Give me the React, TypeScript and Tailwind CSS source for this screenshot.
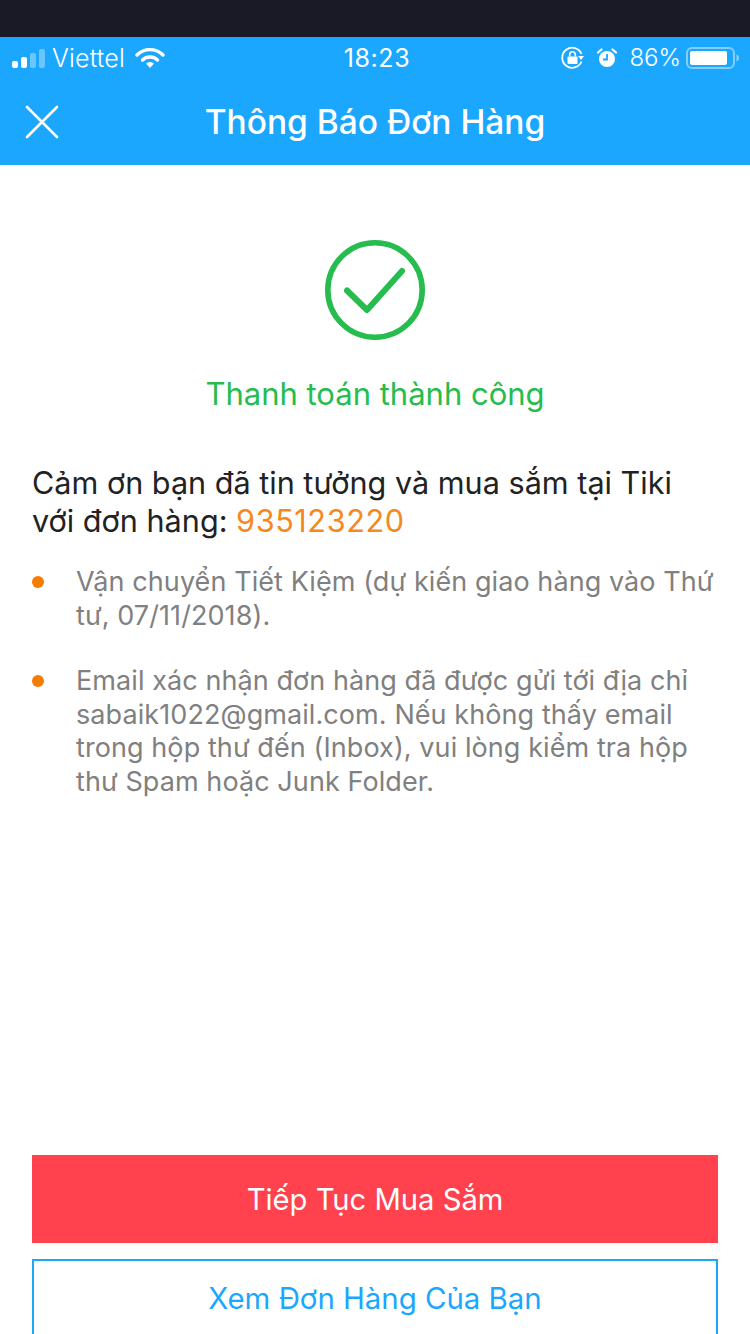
export default function App() {
  const font = { fontFamily: 'Inter, "Noto Sans", sans-serif' };
  return (
    <div style={font} className="w-[750px] h-[1334px] overflow-hidden bg-white flex flex-col">
      <div className="h-[37px] bg-[#1a1a26] shrink-0" />
      <div className="h-[128px] bg-[#1ca7ff] shrink-0 flex flex-col text-white">
        <div className="h-[42px] flex items-center justify-between pl-[12px] pr-[11px]">
          <div className="flex items-center w-[200px]">
            <svg width="33" height="20" viewBox="0 0 33 20" className="mr-[7px] mt-[2px]">
              <rect x="0" y="12" width="6" height="7" rx="2" fill="#fff" />
              <rect x="9" y="8" width="6" height="11" rx="2" fill="#fff" />
              <rect x="18" y="4" width="6" height="15" rx="2" fill="#fff" fillOpacity="0.35" />
              <rect x="27" y="0" width="6" height="19" rx="2" fill="#fff" fillOpacity="0.35" />
            </svg>
            <span className="text-[25px] leading-none font-light tracking-[0.2px] text-white">Viettel</span>
            <svg width="30" height="22" viewBox="0 0 30 22" className="ml-[10px]">
              <path d="M2 8a18.5 18.5 0 0 1 26 0" fill="none" stroke="#fff" strokeWidth="3.4" strokeLinecap="round" />
              <path d="M7.5 13a11 11 0 0 1 15 0" fill="none" stroke="#fff" strokeWidth="3.4" strokeLinecap="round" />
              <path d="M11 16.6a6 6 0 0 1 8 0L15 21z" fill="#fff" />
            </svg>
          </div>
          <span className="text-[25px] leading-none tracking-[0.6px] font-normal ml-[3px]">18:23</span>
          <div className="flex items-center justify-end w-[200px]">
            <svg width="24" height="24" viewBox="0 0 24 24" className="mr-[12px]">
              <path d="M20.5 15.5A10 10 0 1 1 20.5 8" fill="none" stroke="#fff" strokeWidth="1.8" />
              <path d="M18 11h6l-3 4z" fill="#fff" transform="translate(-1 -1)" />
              <rect x="6.5" y="10.5" width="10" height="7.5" rx="1" fill="#fff" />
              <path d="M8.7 10.5V8.500a2.800 2.800 0 0 1 5.600 0v2" fill="none" stroke="#fff" strokeWidth="1.6" />
            </svg>
            <svg width="20" height="20" viewBox="0 0 20 20" className="mr-[12px]">
              <circle cx="10" cy="11" r="8" fill="#fff" />
              <path d="M10 6v5.500H6" fill="none" stroke="#1ca7ff" strokeWidth="1.8" />
              <path d="M1 4.500 4.500 1.500M19 4.500 15.500 1.500" stroke="#fff" strokeWidth="2.200" strokeLinecap="round" />
            </svg>
            <span className="text-[24px] leading-none font-light">86%</span>
            <svg width="53" height="24" viewBox="0 0 53 24" className="ml-[5px]">
              <rect x="1" y="2" width="47" height="20" rx="5" fill="none" stroke="#fff" strokeOpacity="0.45" strokeWidth="2" />
              <rect x="4" y="5" width="37" height="14" rx="2" fill="#fff" />
              <path d="M50.500 8.500c1.500.4 2.500 2 2.500 3.500s-1 3.100-2.500 3.500z" fill="#fff" fillOpacity="0.5" />
            </svg>
          </div>
        </div>
        <div className="relative flex-1 flex items-center justify-center pt-[1px]">
          <svg width="36" height="36" viewBox="0 0 36 36" className="absolute left-[24px] top-[25px]">
            <path d="M3 3 33 33M33 3 3 33" stroke="#fff" strokeWidth="2.600" strokeLinecap="round" />
          </svg>
          <span className="text-[33.500px] leading-none font-medium">Thông Báo Đơn Hàng</span>
        </div>
      </div>

      <div className="flex-1 flex flex-col min-h-0 px-[32px]">
        <div className="flex flex-col items-center pt-[74px]">
          <svg width="102" height="102" viewBox="0 0 102 102">
            <circle cx="51" cy="51" r="47.200" fill="none" stroke="#26bc4e" strokeWidth="5.600" />
            <path d="M23 51.500 43 71 78 32" fill="none" stroke="#26bc4e" strokeWidth="6" strokeLinecap="round" strokeLinejoin="round" />
          </svg>
          <div className="mt-[33px] text-[31px] leading-[40px] text-[#26bc4e]">Thanh toán thành công</div>
        </div>
        <p className="mt-[50px] text-[30.600px] leading-[38px] text-[#222222] whitespace-nowrap">
          Cảm ơn bạn đã tin tưởng và mua sắm tại Tiki
          <br />
          với đơn hàng: <span className="text-[#f5881f] tracking-[0.6px]">935123220</span>
        </p>
        <ul className="mt-[25px] flex flex-col gap-[32px] text-[27px] leading-[33.500px] text-[#808080] tracking-[0.08px]">
          <li className="flex">
            <span className="w-[12px] h-[12px] rounded-full bg-[#f57c00] mt-[11px] shrink-0" />
            <span className="ml-[32px] w-[650px] whitespace-nowrap">
              Vận chuyển Tiết Kiệm (dự kiến giao hàng vào Thứ
              <br />
              tư, 07/11/2018).
            </span>
          </li>
          <li className="flex">
            <span className="w-[12px] h-[12px] rounded-full bg-[#f57c00] mt-[11px] shrink-0" />
            <span className="ml-[32px] w-[650px] whitespace-nowrap">
              Email xác nhận đơn hàng đã được gửi tới địa chỉ
              <br />
              sabaik1022@gmail.com. Nếu không thấy email
              <br />
              trong hộp thư đến (Inbox), vui lòng kiểm tra hộp
              <br />
              thư Spam hoặc Junk Folder.
            </span>
          </li>
        </ul>
        <div className="mt-auto flex flex-col gap-[16px] -mb-[20px]">
          <div className="h-[88px] bg-[#ff424e] text-white text-[29.200px] flex items-center justify-center pt-[1px]">Tiếp Tục Mua Sắm</div>
          <div className="h-[95px] border-2 border-[#1ca7ff] text-[#1ca7ff] text-[29.400px] flex items-center justify-center pb-[14px]">Xem Đơn Hàng Của Bạn</div>
        </div>
      </div>
    </div>
  );
}
